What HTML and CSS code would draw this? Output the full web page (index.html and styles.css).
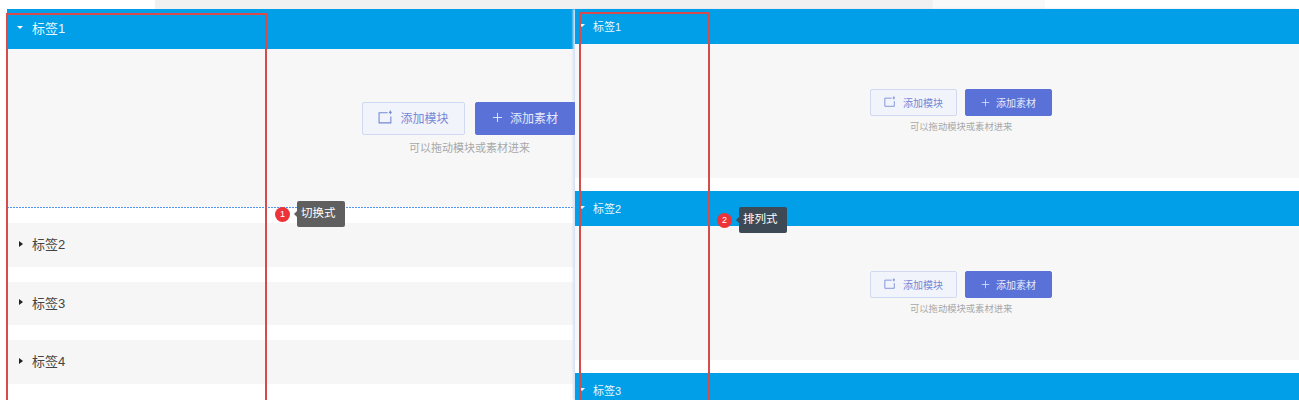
FILE: index.html
```html
<!DOCTYPE html>
<html lang="zh">
<head>
<meta charset="utf-8">
<title>标签</title>
<link rel="stylesheet" href="styles.css">
</head>
<body>
<div class="topband"><div class="band-a"></div><div class="band-b"></div></div>
<main class="page">
  <section class="panel panel-left">
    <div class="head head-l"><span class="tri tri-down"></span>标签1</div>
    <div class="body body-l">
      <div class="actions">
        <button class="btn btn-ghost"><svg class="ic" viewBox="0 0 14 14"><path d="M9 2.5H1v9.5h11V6M11.5 0.5v3.5M10.2 2.2h2.6" fill="none" stroke="currentColor"/></svg>添加模块</button>
        <button class="btn btn-solid"><svg class="ic ic-plus" viewBox="0 0 12 12"><path d="M6 1v10M1 6h10" stroke="currentColor" fill="none"/></svg>添加素材</button>
      </div>
      <p class="hint">可以拖动模块或素材进来</p>
    </div>
    <div class="dash"></div>
    <div class="row"><span class="tri tri-right"></span>标签2</div>
    <div class="row"><span class="tri tri-right"></span>标签3</div>
    <div class="row"><span class="tri tri-right"></span>标签4</div>
  </section>
  <section class="panel panel-right">
    <div class="head head-r"><span class="tri tri-down small"></span>标签1</div>
    <div class="body body-r">
      <div class="actions actions-r">
        <button class="btn btn-ghost"><svg class="ic" viewBox="0 0 14 14"><path d="M9 2.5H1v9.5h11V6M11.5 0.5v3.5M10.2 2.2h2.6" fill="none" stroke="currentColor"/></svg>添加模块</button>
        <button class="btn btn-solid"><svg class="ic ic-plus" viewBox="0 0 12 12"><path d="M6 1v10M1 6h10" stroke="currentColor" fill="none"/></svg>添加素材</button>
      </div>
      <p class="hint">可以拖动模块或素材进来</p>
    </div>
    <div class="head head-r gap"><span class="tri tri-down small"></span>标签2</div>
    <div class="body body-r">
      <div class="actions actions-r">
        <button class="btn btn-ghost"><svg class="ic" viewBox="0 0 14 14"><path d="M9 2.5H1v9.5h11V6M11.5 0.5v3.5M10.2 2.2h2.6" fill="none" stroke="currentColor"/></svg>添加模块</button>
        <button class="btn btn-solid"><svg class="ic ic-plus" viewBox="0 0 12 12"><path d="M6 1v10M1 6h10" stroke="currentColor" fill="none"/></svg>添加素材</button>
      </div>
      <p class="hint">可以拖动模块或素材进来</p>
    </div>
    <div class="head head-r gap"><span class="tri tri-down small"></span>标签3</div>
  </section>
</main>
<div class="frame frame-1"></div>
<div class="frame frame-2"></div>
<div class="note note-1"><span class="badge">1</span><span class="tip">切换式</span></div>
<div class="note note-2"><span class="badge">2</span><span class="tip">排列式</span></div>
</body>
</html>
```
FILE: styles.css
```css
html, body { margin: 0; padding: 0; height: 400px; overflow: hidden; background: #fff; }
body { position: relative; font-family: "Liberation Sans", "Noto Sans CJK SC", sans-serif; }
.topband { position: absolute; top: 0; left: 0; width: 1045px; height: 9px; display: flex; }
.band-a { margin-left: 155px; width: 778px; background: #f1f1f1; }
.band-b { flex: 1; background: #f9f9f9; }
.page { position: relative; display: flex; padding: 9px 0 0 7px; height: 391px; overflow: hidden; }
.panel { display: flex; flex-direction: column; }
.panel-left { width: 568px; flex: none; }
.panel-right { flex: 1; box-shadow: -2px 0 2px #d5e3f5; position: relative; }
.head { background: #009fe8; color: #e8f8ff; display: flex; align-items: center; flex: none; }
.head-l { height: 40px; font-size: 13px; padding: 0 0 3px 10px; box-sizing: border-box; }
.head-r { height: 35px; font-size: 11px; padding: 0 0 2px 4px; box-sizing: border-box; }
.gap { margin-top: 13px; }
.tri { display: inline-block; width: 0; height: 0; flex: none; }
.tri-down { border-left: 3px solid transparent; border-right: 3px solid transparent; border-top: 3px solid #fff; margin-right: 9px; }
.tri-down.small { margin-right: 8px; }
.tri-right { border-top: 3px solid transparent; border-bottom: 3px solid transparent; border-left: 4px solid #222; margin-right: 9px; margin-left: 1px; }
.body { background: #f7f7f7; display: flex; flex-direction: column; align-items: flex-end; flex: none; }
.body-l { height: 158px; }
.body-r { height: 134px; align-items: flex-start; padding-left: 295px; }
.actions { display: flex; margin-top: 53px; gap: 10px; position: relative; z-index: 1; }
.actions-r { margin-top: 45px; gap: 8px; }
.btn { display: flex; align-items: center; justify-content: center; font-family: inherit; padding: 0 0 2px; border-radius: 2px; height: 33px; font-size: 12px; }
.btn-ghost { width: 103px; background: #f2f4fb; border: 1px solid #d0d8f2; color: #7388d6; }
.btn-solid { width: 100px; background: #5a72d8; border: 1px solid #5a72d8; color: #e6eafa; border-radius: 2px 0 0 2px; }
.actions-r .btn { height: 27px; font-size: 10px; padding-bottom: 1px; }
.actions-r .btn-ghost { width: 87px; }
.actions-r .btn-solid { width: 87px; border-radius: 2px; }
.ic { width: 15px; height: 15px; margin-right: 7px; }
.ic-plus { width: 11px; height: 11px; margin-right: 7px; }
.actions-r .ic { width: 12px; height: 12px; margin-right: 7px; }
.actions-r .ic-plus { width: 9px; height: 9px; margin-right: 6px; }
.hint { margin: 4px 45px 0 0; font-size: 11px; line-height: 18px; color: #a8a8a8; }
.body-r .hint { margin: 4px 0 0 40px; font-size: 9.3px; line-height: 15px; }
.dash { height: 1px; background: repeating-linear-gradient(90deg, #4f96ee 0 2px, transparent 2px 3px); flex: none; margin-bottom: 15px; }
.row { background: #f6f6f6; height: 43.5px; margin-bottom: 15px; display: flex; align-items: center; font-size: 13px; color: #444; padding: 0 0 2px 11px; box-sizing: border-box; flex: none; }
.frame { position: absolute; border: 2px solid #d64c4c; border-bottom: 0; height: 400px; box-sizing: border-box; }
.frame-1 { left: 6px; top: 13px; width: 261px; }
.frame-2 { left: 579px; top: 12px; width: 131px; }
.note { position: absolute; display: flex; align-items: center; }
.note-1 { left: 275px; top: 201px; }
.note-2 { left: 717px; top: 207px; }
.badge { width: 15px; height: 15px; border-radius: 50%; background: #ee3338; color: #fff; font-size: 9px; display: flex; align-items: center; justify-content: center; margin-right: 7px; }
.tip { position: relative; background: #5f5f5f; color: #fff; font-size: 11.5px; width: 44px; padding-left: 4px; height: 26px; line-height: 24px; border-radius: 2px; }
.note-2 .tip { background: #3d4a55; }
.tip::before { content: ""; position: absolute; left: -3px; top: 10px; border-top: 3px solid transparent; border-bottom: 3px solid transparent; border-right: 3px solid #5f5f5f; }
.note-2 .tip::before { border-right-color: #3d4a55; }
```
